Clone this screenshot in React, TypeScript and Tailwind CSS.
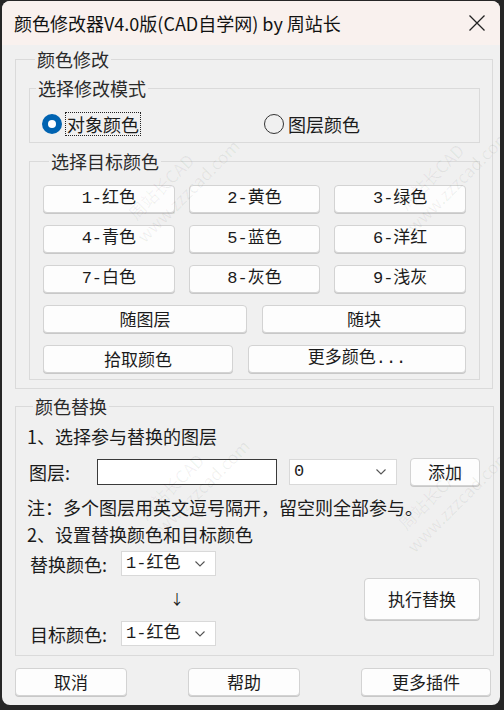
import React from 'react';

const cjk = "font-['Noto_Sans_CJK_SC',sans-serif]";
const mono = "font-['Liberation_Mono','Noto_Sans_CJK_SC',monospace]";

function Btn({ children, className = '' }: { children: React.ReactNode; className?: string }) {
  return (
    <button
      className={`flex items-center justify-center rounded-[4px] border border-[#d3d3d3] bg-[#fdfdfd] text-[17px] leading-[20px] text-[#1b1b1b] shadow-[0_1px_0_#c8c8c8] ${className}`}
    >
      {children}
    </button>
  );
}

function Chevron() {
  return (
    <svg width="12" height="8" viewBox="0 0 12 8" className="shrink-0">
      <path d="M1.5 1.5 L6 6 L10.5 1.5" fill="none" stroke="#555" strokeWidth="1.1" />
    </svg>
  );
}

function Select({ value, className = '' }: { value: string; className?: string }) {
  return (
    <div
      className={`flex items-center justify-between border border-[#d9d9d9] bg-white pl-[4px] pr-[9px] text-[17px] leading-[20px] text-[#1b1b1b] ${className}`}
    >
      <span className={mono}>{value}</span>
      <Chevron />
    </div>
  );
}

// 水印
function Mark({ className }: { className: string }) {
  return (
    <div
      className={`pointer-events-none absolute -rotate-45 whitespace-nowrap text-[17px] leading-[22px] text-[#000000]/[0.06] ${className}`}
    >
      <div className="pl-[10px]">周站长CAD</div>
      <div>www.zzzcad.com</div>
    </div>
  );
}

function Group({ label, children, className = '' }: { label: string; children: React.ReactNode; className?: string }) {
  return (
    <fieldset className={`border border-[#dadada] ${className}`}>
      <legend className="ml-[6px] px-[2px] text-[18px] leading-[22px] text-[#2a2a2a]">{label}</legend>
      {children}
    </fieldset>
  );
}

export default function App() {
  const colors = ['1-红色', '2-黄色', '3-绿色', '4-青色', '5-蓝色', '6-洋红', '7-白色', '8-灰色', '9-浅灰'];

  return (
    <div className={`h-[710px] w-[504px] bg-[#262626] pb-[5px] pl-[2px] pr-[4px] pt-[1px] ${cjk}`}>
      <div className="relative flex h-full flex-col overflow-hidden rounded-[8px] bg-[#f0f0f0] text-[#1b1b1b]">
        {/* 标题栏 */}
        <div className="flex h-[44px] shrink-0 items-center justify-between bg-[#f9f1ee] pl-[12px] pr-[14px]">
          <span className="text-[18px] leading-[22px] text-[#111]">颜色修改器V4.0版(CAD自学网) by 周站长</span>
          <svg width="18" height="18" viewBox="0 0 18 18">
            <path d="M1.5 1.5 L16.5 16.5 M16.5 1.5 L1.5 16.5" stroke="#222" strokeWidth="1.3" />
          </svg>
        </div>

        {/* 颜色修改 */}
        <Group label="颜色修改" className="ml-[13px] mr-[7px] mt-[3px] pb-[8px] pl-[13px] pr-[12px]">
          <Group label="选择修改模式" className="mt-[7px] pb-[6px]">
            <div className="mt-[13px] flex h-[24px] items-center pl-[12px]">
              <div className="flex items-center">
                <span className="flex h-[20px] w-[20px] items-center justify-center rounded-full bg-[#0063b1]">
                  <span className="h-[8px] w-[8px] rounded-full bg-white" />
                </span>
                <span className="ml-[3px] border border-dotted border-[#222] px-[1px] text-[18px] leading-[22px]">对象颜色</span>
              </div>
              <div className="ml-[123px] flex items-center">
                <span className="h-[20px] w-[20px] rounded-full border border-[#333]" />
                <span className="ml-[4px] text-[18px] leading-[22px]">图层颜色</span>
              </div>
            </div>
          </Group>

          <Group label="选择目标颜色" className="mt-[7px] px-[13px] pb-[6px]">
            <div className="mt-[13px] grid grid-cols-3 gap-x-[14px] gap-y-[12px]">
              {colors.map((c) => (
                <Btn key={c} className={`h-[28px] ${mono}`}>
                  {c}
                </Btn>
              ))}
            </div>
            <div className="mt-[12px] grid grid-cols-2 gap-x-[15px]">
              <Btn className="h-[28px]">随图层</Btn>
              <Btn className="h-[28px]">随块</Btn>
            </div>
            <div className="mt-[12px] flex gap-x-[15px]">
              <Btn className="h-[28px] w-[190px]">拾取颜色</Btn>
              <Btn className={`h-[28px] flex-1 ${mono}`}>更多颜色...</Btn>
            </div>
          </Group>
        </Group>

        {/* 颜色替换 */}
        <Group label="颜色替换" className="ml-[13px] mr-[7px] mt-[6px] pb-[9px] pl-[11px] pr-[13px]">
          <div className="mt-[6px] text-[18px] leading-[26px]">1、选择参与替换的图层</div>
          <div className="mt-[8px] flex h-[30px] items-center">
            <span className="ml-[2px] w-[68px] text-[18px] leading-[22px]">图层:</span>
            <div className="h-[26px] w-[180px] border border-[#3a3a3a] bg-white" />
            <Select value="0" className="ml-[12px] h-[26px] w-[108px]" />
            <Btn className="ml-[13px] h-[28px] w-[70px]">添加</Btn>
          </div>
          <div className="mt-[7px] text-[18px] leading-[26px]">注：多个图层用英文逗号隔开，留空则全部参与。</div>
          <div className="mt-[1px] text-[18px] leading-[26px]">2、设置替换颜色和目标颜色</div>
          <div className="flex items-start">
            <div className="flex flex-col">
              <div className="mt-[4px] flex items-center">
                <span className="ml-[3px] w-[91px] text-[18px] leading-[22px]">替换颜色:</span>
                <Select value="1-红色" className="h-[25px] w-[95px]" />
              </div>
              <div className="ml-[143px] mt-[11px] text-[14px] leading-[22px]">↓</div>
              <div className="mt-[12px] flex items-center">
                <span className="ml-[3px] w-[91px] text-[18px] leading-[22px]">目标颜色:</span>
                <Select value="1-红色" className="h-[25px] w-[95px]" />
              </div>
            </div>
            <Btn className="ml-auto mt-[31px] h-[42px] w-[116px]">执行替换</Btn>
          </div>
        </Group>

        {/* 底部按钮 */}
        <div className="ml-[13px] mr-[9px] mt-[12px] flex justify-between">
          <Btn className="h-[28px] w-[112px]">取消</Btn>
          <Btn className="h-[28px] w-[112px]">帮助</Btn>
          <Btn className="h-[28px] w-[130px]">更多插件</Btn>
        </div>

        <Mark className="left-[110px] top-[160px]" />
        <Mark className="left-[380px] top-[150px]" />
        <Mark className="left-[120px] top-[460px]" />
        <Mark className="left-[380px] top-[470px]" />
      </div>
    </div>
  );
}
